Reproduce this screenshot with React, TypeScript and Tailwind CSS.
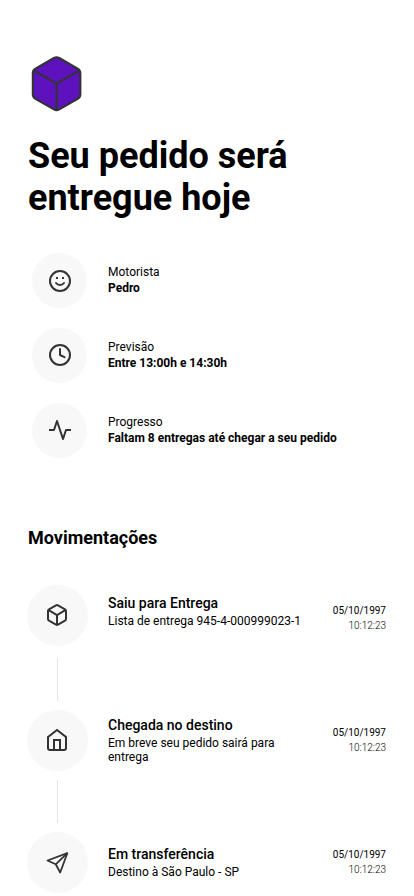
import type { ReactNode } from 'react';

function Icon({ children, join = 'round' }: { children: ReactNode; join?: 'round' | 'miter' }) {
  return (
    <svg className="block shrink-0" width="24" height="24" viewBox="0 0 24 24" fill="none" stroke="#333333" strokeWidth="2" strokeLinejoin={join}>
      {children}
    </svg>
  );
}

const boxOutline =
  'M21 16V8a2 2 0 0 0-1-1.73l-7-4a2 2 0 0 0-2 0l-7 4A2 2 0 0 0 3 8v8a2 2 0 0 0 1 1.73l7 4a2 2 0 0 0 2 0l7-4A2 2 0 0 0 21 16z';
const boxEdges = 'M3.27 6.96 12 12.01l8.73-5.05M12 22.08V12';

const smile = (
  <Icon>
    <circle cx="12" cy="12" r="10" />
    <path d="M8 14s1.5 2 4 2 4-2 4-2" strokeLinecap="round" />
    <path d="M9 8v2M15 8v2" />
  </Icon>
);
const clock = (
  <Icon>
    <circle cx="12" cy="12" r="10" />
    <path d="M12 6v6l4.500 2.200" strokeLinecap="round" />
  </Icon>
);
const activity = (
  <Icon>
    <path d="M22 12h-4l-3 9L9 3l-3 9H2" strokeLinecap="square" />
  </Icon>
);
const box = (
  <Icon>
    <path d={boxOutline} />
    <path d={boxEdges} />
  </Icon>
);
const home = (
  <Icon join="miter">
    <path d="M3 9l9-7 9 7v11a2 2 0 0 1-2 2H5a2 2 0 0 1-2-2z" />
    <path d="M9 22V12h6v10" />
  </Icon>
);
const send = (
  <Icon>
    <path d="M22.300 3.200 2.500 10.500 10.700 14.300 15.200 22.500z" strokeWidth="1.800" />
    <path d="M22.300 3.200 10.700 14.300" strokeWidth="1.800" />
  </Icon>
);

const details = [
  { icon: smile, label: 'Motorista', value: 'Pedro', iconPad: 'pt-4' },
  { icon: clock, label: 'Previsão', value: 'Entre 13:00h e 14:30h', iconPad: 'pt-[15px]' },
  { icon: activity, label: 'Progresso', value: 'Faltam 8 entregas até chegar a seu pedido', iconPad: 'pt-[15px]' },
];

const events = [
  { icon: box, title: 'Saiu para Entrega', text: 'Lista de entrega 945-4-000999023-1', pad: 'pt-[10px]', datePad: 'pt-[18px]', line: 'mt-3 mb-[9px]' },
  { icon: home, title: 'Chegada no destino', text: 'Em breve seu pedido sairá para entrega', pad: 'pt-[7px]', datePad: 'pt-[15px]', line: 'my-[9px]' },
  { icon: send, title: 'Em transferência', text: 'Destino à São Paulo - SP', pad: 'pt-[14px]', datePad: 'pt-[15px]', line: '' },
];

export default function App() {
  return (
    <main className="h-[896px] w-full overflow-hidden bg-white pl-[27px] pr-7 pt-[53px] font-[Roboto,sans-serif] text-black">
      <svg className="block" width="60" height="60" viewBox="0 0 60 60" fill="#5D12BD" stroke="#333333" strokeLinejoin="round">
        <g transform="translate(-2.1 -1) scale(2.640)" strokeWidth="0.800">
          <path d={boxOutline} />
          <path d={boxEdges} fill="none" />
        </g>
      </svg>
      <h1 className="ml-px mt-[22px] text-[36px] font-bold leading-[42px]">
        Seu pedido será<br />entregue hoje
      </h1>
      <section className="ml-[5px] mt-[34px] flex flex-col gap-5">
        {details.map((d) => (
          <div key={d.label} className="flex h-[55px]">
            <div className={`size-[55px] rounded-full bg-[#f8f8f8] pl-4 ${d.iconPad}`}>{d.icon}</div>
            <div className="ml-[21px] pt-[11px] text-xs leading-4">
              <p>{d.label}</p>
              <p className="font-bold">{d.value}</p>
            </div>
          </div>
        ))}
      </section>
      <h2 className="ml-px mt-[69px] text-[18px] font-bold leading-[21px]">Movimentações</h2>
      <section className="mt-[37px]">
        {events.map((e) => (
          <div key={e.title} className="flex">
            <div className="flex w-[61px] shrink-0 flex-col items-center">
              <div className="size-[61px] rounded-full bg-[#f8f8f8] pl-[18px] pt-[18px]">{e.icon}</div>
              {e.line && <div className={`h-[43px] w-px bg-[#e5e5e5] ${e.line}`} />}
            </div>
            <div className={`ml-5 w-[200px] shrink-0 ${e.pad}`}>
              <h3 className="text-sm font-medium leading-4">{e.title}</h3>
              <p className="mt-[3px] text-xs leading-[14px]">{e.text}</p>
            </div>
            <div className={`flex-1 text-right text-[10px] leading-[15px] ${e.datePad}`}>
              <p>05/10/1997</p>
              <p className="font-light">10:12:23</p>
            </div>
          </div>
        ))}
      </section>
    </main>
  );
}
